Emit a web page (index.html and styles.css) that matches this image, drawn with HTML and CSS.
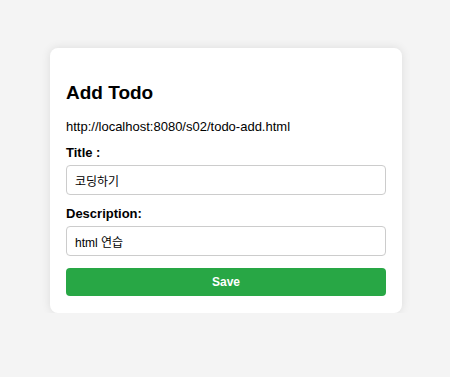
FILE: index.html
```html
<!DOCTYPE html>
<html lang="ko">
<head>
  <meta charset="UTF-8">
  <meta name="viewport" content="width=device-width, initial-scale=1.0">
  <title>Add Todo</title>
  <link rel="stylesheet" href="styles.css">
</head>
<body>
  <div class="container">
    <h2>Add Todo</h2>
    <p class="url">http://localhost:8080/s02/todo-add.html</p>
    <form class="todo-form">
      <label for="title">Title :</label>
      <input type="text" id="title" name="title" value="코딩하기">
      <label for="description">Description:</label>
      <input type="text" id="description" name="description" value="html 연습">
      <button type="submit" class="save-button">Save</button>
    </form>
  </div>
</body>
</html>
```

FILE: styles.css
```css
/* 기본 스타일 */
body {
  margin: 0;
  padding: 48px 0 0 2px;
  font-family: "Liberation Sans", Arial, "Noto Sans CJK KR", sans-serif;
  background-color: #f4f4f4;
  color: #000;
}

.container {
  width: 320px;
  margin: 0 auto;
  padding: 16px 16px 17px;
  background-color: #fff;
  border-radius: 8px;
  box-shadow: 0 0 10px rgba(0, 0, 0, 0.1);
}

h2 {
  font-size: 19px;
  margin: 18px 0 0;
}

.url {
  font-size: 13px;
  margin: 15px 0 0;
}

/* 입력 폼 */
.todo-form {
  display: flex;
  flex-direction: column;
}

.todo-form label {
  font-size: 13px;
  font-weight: bold;
  margin-top: 11px;
  margin-bottom: 5px;
}

.todo-form input[type="text"] {
  height: 30px;
  box-sizing: border-box;
  padding: 0 8px;
  font-size: 12px;
  font-family: "Liberation Sans", Arial, "Noto Sans CJK KR", sans-serif;
  border: 1px solid #ccc;
  border-radius: 4px;
}

.save-button {
  margin-top: 12px;
  height: 28px;
  font-size: 12px;
  font-weight: bold;
  color: #fff;
  background-color: #28a745;
  border: none;
  border-radius: 4px;
  cursor: pointer;
}
```
